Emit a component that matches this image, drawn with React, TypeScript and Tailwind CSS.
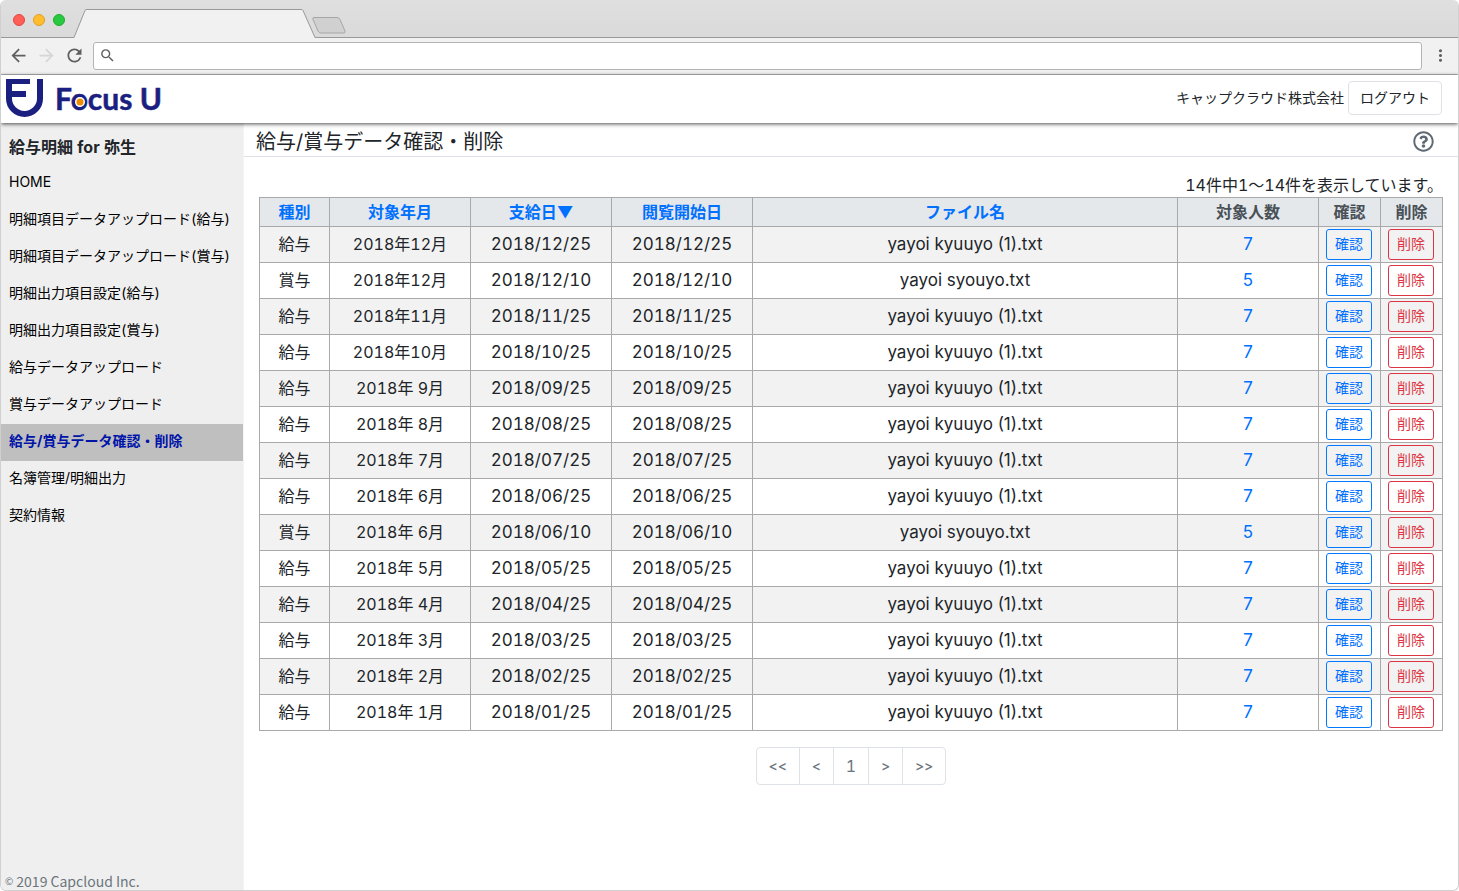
import React from 'react';
import { MdArrowBack, MdArrowForward, MdRefresh, MdSearch, MdMoreVert } from 'react-icons/md';
import { FaRegQuestionCircle } from 'react-icons/fa';

interface PayrollRow {
  type: string;
  month: string;
  payDate: string;
  openDate: string;
  file: string;
  count: number;
}

const menuItems = [
  'HOME',
  '明細項目データアップロード(給与)',
  '明細項目データアップロード(賞与)',
  '明細出力項目設定(給与)',
  '明細出力項目設定(賞与)',
  '給与データアップロード',
  '賞与データアップロード',
  '給与/賞与データ確認・削除',
  '名簿管理/明細出力',
  '契約情報',
];

const ACTIVE_ITEM = '給与/賞与データ確認・削除';

const salary = (month: string, date: string): PayrollRow => ({
  type: '給与',
  month,
  payDate: date,
  openDate: date,
  file: 'yayoi kyuuyo (1).txt',
  count: 7,
});

const bonus = (month: string, date: string): PayrollRow => ({
  type: '賞与',
  month,
  payDate: date,
  openDate: date,
  file: 'yayoi syouyo.txt',
  count: 5,
});

const rows: PayrollRow[] = [
  salary('2018年12月', '2018/12/25'),
  bonus('2018年12月', '2018/12/10'),
  salary('2018年11月', '2018/11/25'),
  salary('2018年10月', '2018/10/25'),
  salary('2018年 9月', '2018/09/25'),
  salary('2018年 8月', '2018/08/25'),
  salary('2018年 7月', '2018/07/25'),
  salary('2018年 6月', '2018/06/25'),
  bonus('2018年 6月', '2018/06/10'),
  salary('2018年 5月', '2018/05/25'),
  salary('2018年 4月', '2018/04/25'),
  salary('2018年 3月', '2018/03/25'),
  salary('2018年 2月', '2018/02/25'),
  salary('2018年 1月', '2018/01/25'),
];

const columns = [
  { label: '種別', sortable: true, width: 'w-[70px]' },
  { label: '対象年月', sortable: true, width: 'w-[141px]' },
  { label: '支給日▼', sortable: true, width: 'w-[141px]' },
  { label: '閲覧開始日', sortable: true, width: 'w-[141px]' },
  { label: 'ファイル名', sortable: true, width: '' },
  { label: '対象人数', sortable: false, width: 'w-[141px]' },
  { label: '確認', sortable: false, width: 'w-[62px]' },
  { label: '削除', sortable: false, width: 'w-[62px]' },
];

const BrowserBar: React.FC = () => (
  <div>
    <div className="flex h-[38px] items-end bg-gradient-to-b from-[#dfdfdf] to-[#dadada] shadow-[inset_0_-1px_0_#999]">
      <div className="flex gap-2 self-center pt-[2px] pl-3">
        <span className="size-3 rounded-full border border-[#e2463f] bg-[#ff5f57]" />
        <span className="size-3 rounded-full border border-[#dfa023] bg-[#ffbd2e]" />
        <span className="size-3 rounded-full border border-[#1dad2b] bg-[#28c940]" />
      </div>
      <svg width="290" height="38" viewBox="0 0 290 38" className="ml-2" aria-hidden="true">
        <path d="M0 38 L1 37.5 L12 10.5 Q12.6 9.5 14 9.5 H228 Q229.6 9.5 230 10.5 L242 37.5 L243 38 Z" fill="#f1f1f1" />
        <path d="M0 37.5 H1 L12 10.5 Q12.6 9.5 14 9.5 H228 Q229.6 9.5 230 10.5 L242 37.5 H243" fill="none" stroke="#999" />
        <path d="M241 17.5 H264 Q266 17.5 267 19.5 L272 31 Q272.5 33 271 33 H248 Q246 33 245 31 L240 19.5 Q239.3 17.5 241 17.5 Z" fill="#d0d0d0" stroke="#a6a6a6" />
      </svg>
    </div>
    <div className="flex h-[37px] items-center border-b border-[#b6b6b6] bg-[#f1f1f1] pr-2 pb-px pl-[7px] text-[#5f5f5f]">
      <button type="button" aria-label="戻る" className="mr-[7px]"><MdArrowBack size={21} /></button>
      <button type="button" aria-label="進む" className="mr-[7px] text-[#d6d6d6]"><MdArrowForward size={21} /></button>
      <button type="button" aria-label="再読み込み" className="mr-2"><MdRefresh size={21} /></button>
      <label className="flex h-7 flex-1 items-center rounded-[3px] border border-[#b4b4b4] bg-white pl-[5px]">
        <MdSearch size={17} />
        <input type="text" aria-label="アドレス" className="flex-1 pl-1 text-sm outline-none" />
      </label>
      <button type="button" aria-label="メニュー" className="ml-[9px]"><MdMoreVert size={19} /></button>
    </div>
  </div>
);

const Logo: React.FC = () => (
  <svg width="162" height="42" viewBox="0 0 162 42" role="img" aria-label="Focus U">
    <g fill="none" stroke="#1b1f80" strokeWidth="6">
      <path d="M3 3 V20.5 A15.5 15.5 0 0 0 34 20.5 V1" />
      <path d="M0 3.5 H24" strokeWidth="5" />
      <path d="M0 16 H20" />
    </g>
    <text x="49" y="32" fill="#1b1f80" stroke="#1b1f80" strokeWidth="0.5" className="font-['Lato'] text-[30px] font-bold">Focus U</text>
    <circle cx="74" cy="24" r="5" fill="#fff" />
    <circle cx="74" cy="24" r="3.5" fill="#f08c00" />
  </svg>
);

const Header: React.FC = () => (
  <header className="relative z-10 flex h-12 items-center justify-between bg-white pr-4 pl-[5px] shadow-[0_1px_4px_rgba(0,0,0,0.7)]">
    <a href="#"><Logo /></a>
    <div className="flex items-center gap-1 pb-[2px] text-sm text-[#212529]">
      <span className="pb-px">キャップクラウド株式会社</span>
      <button type="button" className="h-[34px] rounded border border-[#dee2e6] px-[11px] pb-px">ログアウト</button>
    </div>
  </header>
);

const Sidebar: React.FC = () => (
  <aside className="flex w-[243px] shrink-0 flex-col border-r border-[#f4f4f4] bg-[#efefef]">
    <h2 className="px-2 pt-3 pb-[6px] text-base leading-6 font-bold text-[#212529]">給与明細 for 弥生</h2>
    <nav className="flex flex-col text-sm leading-[21px]">
      {menuItems.map(item => (
        <a
          key={item}
          href="#"
          className={
            item === ACTIVE_ITEM
              ? 'bg-[#bfbfbf] px-2 pt-[6px] pb-[10px] font-bold text-[#0014a8]'
              : 'px-2 pt-[6px] pb-[10px] text-black'
          }
        >
          {item}
        </a>
      ))}
    </nav>
    <footer className="mt-auto flex items-center gap-[3px] pl-1 font-['Noto_Sans_CJK_JP',sans-serif] text-sm leading-[18px] text-[#6c757d]">
      <span className="text-[10px]">©</span>
      <span>2019 Capcloud Inc.</span>
    </footer>
  </aside>
);

const PayrollTable: React.FC = () => (
  <table className="w-full table-fixed border-collapse text-center leading-6">
    <thead className="bg-[#e4e8eb] text-[#495057]">
      <tr>
        {columns.map(col => (
          <th key={col.label} className={`${col.width} border border-[#a9a9a9] py-[2px] font-bold`}>
            {col.sortable ? <a href="#" className="text-[#0070ff]">{col.label}</a> : col.label}
          </th>
        ))}
      </tr>
    </thead>
    <tbody>
      {rows.map(row => (
        <tr key={row.payDate} className="odd:bg-[#f2f2f2]">
          <td className="border border-[#a9a9a9] pb-[2px]">{row.type}</td>
          <td className="border border-[#a9a9a9] pb-[2px]">{row.month}</td>
          <td className="border border-[#a9a9a9] pb-[2px] text-[17px]">{row.payDate}</td>
          <td className="border border-[#a9a9a9] pb-[2px] text-[17px]">{row.openDate}</td>
          <td className="border border-[#a9a9a9] pb-[2px] text-[17px] proportional-nums">{row.file}</td>
          <td className="border border-[#a9a9a9] pb-[2px] text-[17px]">
            <a href="#" className="text-[#0070ff]">{row.count}</a>
          </td>
          <td className="border border-[#a9a9a9] py-[2px] pr-px">
            <button type="button" className="mx-auto block h-[31px] rounded-[3px] border border-[#007bff] px-2 pb-[2px] text-sm text-[#0070ff]">確認</button>
          </td>
          <td className="border border-[#a9a9a9] py-[2px] pr-px">
            <button type="button" className="mx-auto block h-[31px] rounded-[3px] border border-[#dc3545] px-2 pb-[2px] text-sm text-[#dc3545]">削除</button>
          </td>
        </tr>
      ))}
    </tbody>
  </table>
);

const Pagination: React.FC = () => (
  <nav aria-label="ページ" className="mt-4 flex justify-center">
    <div className="flex divide-x divide-[#dee2e6] rounded border border-[#dee2e6] text-[#6c757d]">
      {['<<', '<', '1', '>', '>>'].map(label => (
        <button key={label} type="button" className={label === '1' ? 'h-9 px-3' : 'h-9 px-3 text-sm font-medium'}>
          {label}
        </button>
      ))}
    </div>
  </nav>
);

const App: React.FC = () => {
  return (
    <div className="flex min-h-screen flex-col overflow-hidden rounded-md border border-t-0 border-[#d0d0d0] bg-white font-['Inter','Noto_Sans_CJK_JP',sans-serif] text-base text-[#212529] tabular-nums">
      <BrowserBar />
      <Header />
      <div className="flex flex-1">
        <Sidebar />
        <main className="min-w-0 flex-1">
          <div className="flex h-[34px] items-center justify-between border-b border-[#dee2e6] pt-1 pr-6 pl-3">
            <h1 className="pt-px text-xl leading-7">給与/賞与データ確認・削除</h1>
            <button type="button" aria-label="ヘルプ" className="text-[#5f6a74]"><FaRegQuestionCircle size={21} /></button>
          </div>
          <div className="px-[15px] pt-4">
            <p className="text-right leading-6">14件中1〜14件を表示しています。</p>
            <PayrollTable />
            <Pagination />
          </div>
        </main>
      </div>
    </div>
  );
};

export default App;
